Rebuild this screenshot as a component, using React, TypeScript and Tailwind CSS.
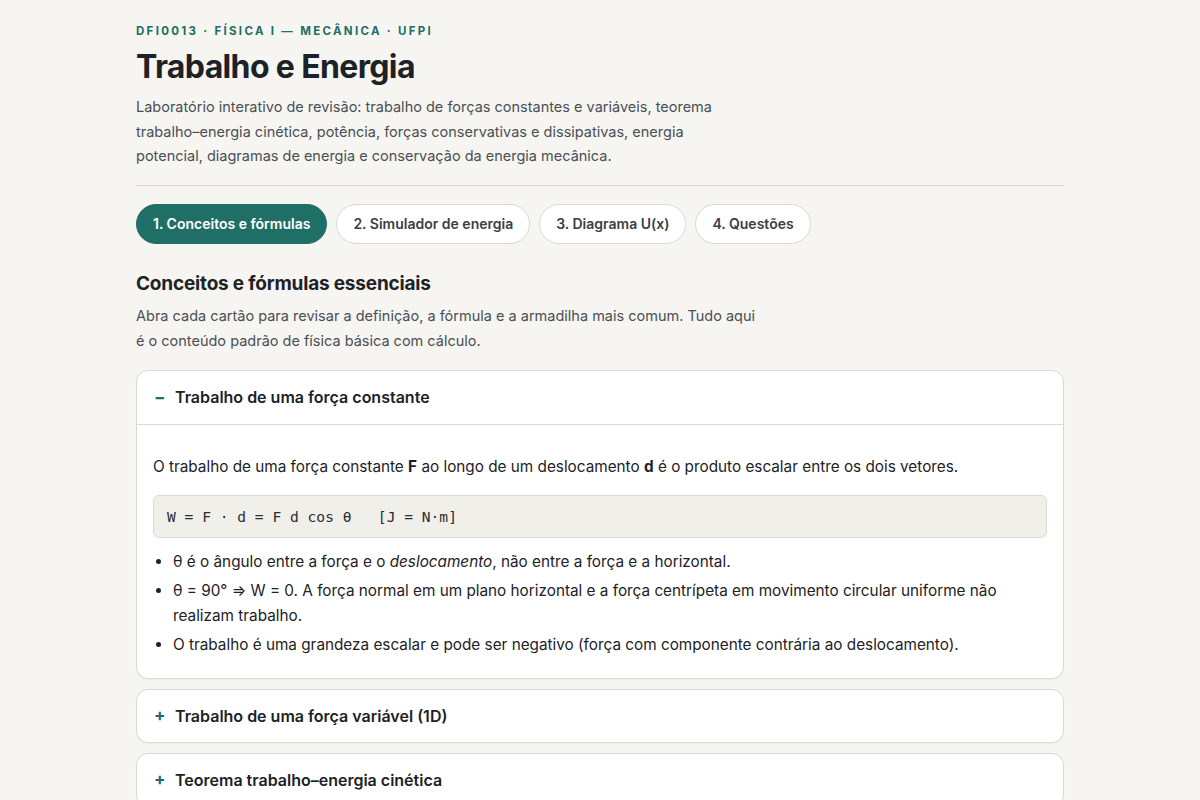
import { useState } from "react";

const tabs = ["1. Conceitos e fórmulas", "2. Simulador de energia", "3. Diagrama U(x)", "4. Questões"];

const cards = [
  "Trabalho de uma força constante",
  "Trabalho de uma força variável (1D)",
  "Teorema trabalho–energia cinética",
  "Potência",
];

export default function App() {
  const [tab, setTab] = useState(0);
  const [open, setOpen] = useState(0);

  return (
    <div className="min-h-screen bg-[#f6f5f1] text-[#1f2328]" style={{ fontFamily: "Inter, 'Noto Sans', sans-serif" }}>
      <main className="mx-auto w-[928px] pt-[23px] pb-10">
        {/* Header */}
        <header className="pb-[16px] border-b border-[#dcd9d2]">
          <div className="text-[11.5px] font-bold tracking-[0.2em] uppercase text-[#1d6f65] leading-4">
            DFI0013 · Física I — Mecânica · UFPI
          </div>
          <h1 className="mt-[8px] text-[32px] font-bold tracking-[-0.02em] leading-[40px] text-[#1d2226]">
            Trabalho e Energia
          </h1>
          <p className="mt-[8px] max-w-[600px] text-[14.5px] leading-[24.5px] text-[#4a4f55]">
            Laboratório interativo de revisão: trabalho de forças constantes e variáveis, teorema trabalho–energia cinética,
            potência, forças conservativas e dissipativas, energia potencial, diagramas de energia e conservação da energia
            mecânica.
          </p>
        </header>

        {/* Tabs */}
        <nav className="mt-[18px] flex gap-[9px]">
          {tabs.map((t, i) => (
            <button
              key={t}
              onClick={() => setTab(i)}
              className={
                i === tab
                  ? "h-10 px-4 rounded-full bg-[#1f6f66] text-white text-[14px] font-semibold border border-[#1f6f66]"
                  : "h-10 px-4 rounded-full bg-white text-[#3b4046] text-[14px] font-semibold border border-[#dcd9d2]"
              }
            >
              {t}
            </button>
          ))}
        </nav>

        {/* Section */}
        <section className="mt-[26px]">
          <h2 className="text-[19px] font-bold tracking-[-0.01em] leading-7 text-[#1d2226]">Conceitos e fórmulas essenciais</h2>
          <p className="mt-[5px] max-w-[628px] text-[14.5px] leading-[25px] text-[#4a4f55]">
            Abra cada cartão para revisar a definição, a fórmula e a armadilha mais comum. Tudo aqui é o conteúdo padrão de
            física básica com cálculo.
          </p>

          <div className="mt-[17px] flex flex-col gap-[10px]">
            {cards.map((c, i) => (
              <div key={c} className="bg-white border border-[#dcd9d2] rounded-[12px] shadow-[0_1px_2px_rgba(0,0,0,0.04)]">
                <button
                  onClick={() => setOpen(open === i ? -1 : i)}
                  className={
                    "w-full flex items-center gap-[11px] pl-[17px] pr-5 text-left" +
                    (open === i ? " border-b border-[#dcd9d2] h-[54px]" : " h-[52px]")
                  }
                >
                  <span className="w-[10px] text-[17px] font-bold text-[#1f6f66] leading-none">{open === i ? "−" : "+"}</span>
                  <span className="text-[16px] font-semibold text-[#1d2226]">{c}</span>
                </button>
                {open === i && i === 0 && (
                  <div className="px-4 pt-[30px] pb-[21px] text-[15.3px] text-[#1d2226]">
                    <p className="leading-6">
                      O trabalho de uma força constante <b>F</b> ao longo de um deslocamento <b>d</b> é o produto escalar entre
                      os dois vetores.
                    </p>
                    <pre
                      className="mt-[16px] bg-[#f1efe9] border border-[#dedad1] rounded-[6px] px-[13px] py-[10px] text-[14.6px] leading-[21px] text-[#2a2e33]"
                      style={{ fontFamily: "'DejaVu Sans Mono', 'Liberation Mono', monospace" }}
                    >
                      W = F · d = F d cos θ   [J = N·m]
                    </pre>
                    <ul className="mt-[11px] pl-5 list-disc space-y-[4px] leading-[25px] marker:text-[#1d2226]">
                      <li>
                        θ é o ângulo entre a força e o <i>deslocamento</i>, não entre a força e a horizontal.
                      </li>
                      <li>
                        θ = 90° ⇒ W = 0. A força normal em um plano horizontal e a força centrípeta em movimento circular
                        uniforme não realizam trabalho.
                      </li>
                      <li>
                        O trabalho é uma grandeza escalar e pode ser negativo (força com componente contrária ao deslocamento).
                      </li>
                    </ul>
                  </div>
                )}
              </div>
            ))}
          </div>
        </section>
      </main>
    </div>
  );
}
